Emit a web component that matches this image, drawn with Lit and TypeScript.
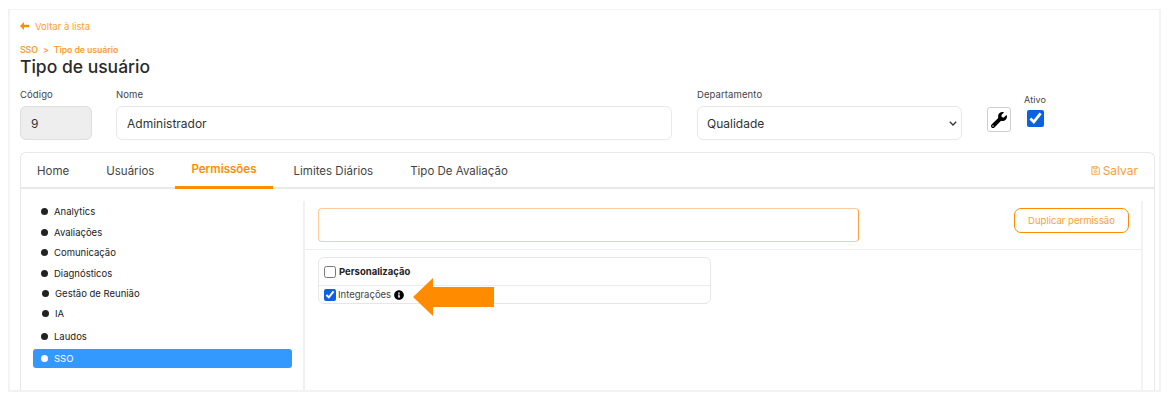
import { LitElement, html, css, svg } from "lit";
import { customElement } from "lit/decorators.js";

const WRENCH = svg`<path d="M507.73 109.1c-2.24-9.03-13.54-12.09-20.12-5.51l-74.36 74.36-67.88-11.31-11.31-67.88 74.36-74.36c6.62-6.62 3.43-17.9-5.66-20.16-47.38-11.74-99.55.91-136.58 37.93-39.64 39.64-50.55 97.1-34.05 147.2L18.74 402.76c-24.99 24.99-24.99 65.51 0 90.5 24.99 24.99 65.51 24.99 90.5 0l213.21-213.21c50.12 16.71 107.47 5.68 147.37-34.22 37.07-37.07 49.7-89.32 37.91-136.73zM64 472c-13.25 0-24-10.75-24-24 0-13.26 10.75-24 24-24s24 10.74 24 24c0 13.25-10.75 24-24 24z"/>`;
const INFO = svg`<path d="M256 8C119 8 8 119 8 256s111 248 248 248 248-111 248-248S393 8 256 8zm0 110c23.2 0 42 18.8 42 42s-18.8 42-42 42-42-18.8-42-42 18.8-42 42-42zm56 254c0 6.6-5.4 12-12 12h-88c-6.6 0-12-5.4-12-12v-24c0-6.6 5.4-12 12-12h12v-64h-12c-6.6 0-12-5.4-12-12v-24c0-6.6 5.4-12 12-12h64c6.6 0 12 5.4 12 12v100h12c6.6 0 12 5.4 12 12v24z"/>`;

const ITEMS = [
  { label: "Analytics", h: 20, x: 8 },
  { label: "Avaliações", h: 23, x: 8 },
  { label: "Comunicação", h: 16, x: 8 },
  { label: "Diagnósticos", h: 26, x: 8 },
  { label: "Gestão de Reunião", h: 14, x: 9 },
  { label: "IA", h: 26, x: 9 },
  { label: "Laudos", h: 20, x: 8 },
];

@customElement("app-root")
export class AppRoot extends LitElement {
  static styles = css`
    :host { display: block; height: 406px; background: #fff; font-family: Inter, "Noto Sans", sans-serif; color: #333; overflow: hidden; }
    .page { margin: 9px 11px 0 8px; height: 383px; box-sizing: border-box; border: 2px solid #f3f3f3; border-top-width: 1px; padding: 9px 4px 0 10px; display: flex; flex-direction: column; position: relative; }
    .back { height: 14px; display: flex; align-items: center; gap: 6px; font-size: 9.5px; color: #ff9d33; }
    .back svg { width: 9px; height: 8px; fill: #ff8c00; }
    .crumb { margin-top: 10px; height: 12px; display: flex; align-items: center; gap: 5px; font-size: 8.8px; font-weight: 600; color: #ff9d33; letter-spacing: -0.1px; }
    h1 { margin: 1px 0 0; height: 22px; line-height: 22px; font-size: 17.5px; font-weight: 500; color: #2b2b2b; }
    .fields { margin-top: 11px; display: flex; align-items: flex-start; }
    .field { display: flex; flex-direction: column; gap: 5px; }
    label, .lbl { height: 12px; line-height: 12px; font-size: 9.5px; color: #444; letter-spacing: 0.1px; }
    .code { width: 72px; margin-right: 24px; }
    .name { width: 556px; margin-right: 25px; }
    .dept { width: 265px; margin-right: 25px; }
    .input { height: 34px; box-sizing: border-box; border: 1px solid #e8e8e8; border-radius: 6px; padding: 0 10px; font: 400 12px Inter, sans-serif; color: #333; background: #fff; outline: none; width: 100%; }
    .input.off { background: #eeeeee; border-color: #dedede; }
    select.input {
      appearance: none;
      padding-left: 9px;
      background-image: url("data:image/svg+xml,%3Csvg xmlns='http://www.w3.org/2000/svg' width='8' height='5' viewBox='0 0 8 5'%3E%3Cpath d='M.8.8 4 4 7.2.8' fill='none' stroke='%23333' stroke-width='1.3'/%3E%3C/svg%3E");
      background-repeat: no-repeat;
      background-position: right 4px center;
    }
    .tool { margin-top: 18px; width: 24px; height: 25px; box-sizing: border-box; border: 1px solid #cfcfcf; border-radius: 3px; background: #fff; display: flex; align-items: center; justify-content: center; padding: 0; margin-right: 13px; }
    .tool svg { width: 16px; height: 16px; fill: #000; }
    .ativo { margin-top: 5px; display: flex; flex-direction: column; gap: 4px; }
    .ativo .lbl { font-size: 9px; }
    .ativo input { width: 17px; height: 17px; margin: 0 0 0 3px; accent-color: #0b62e0; }

    .tabs { margin-top: 12px; flex: 1; border: 1px solid #e8e8e8; border-bottom: 0; border-radius: 6px 6px 0 0; display: flex; flex-direction: column; min-height: 0; }
    .bar { height: 36px; box-sizing: border-box; border-bottom: 2px solid #e9e9e9; display: flex; align-items: stretch; gap: 5px; padding-right: 16px; flex: none; }
    .tab { padding: 0 16px; display: flex; align-items: center; font-size: 11.5px; color: #444; height: 36px; box-sizing: border-box; }
    .tab.active { color: #ff8c00; font-weight: 600; border-bottom: 3px solid #ff8c00; padding-bottom: 1px; margin-bottom: -2px; letter-spacing: 0.02px; }
    .save { margin-left: auto; display: flex; align-items: center; gap: 3px; font-size: 12px; color: #ff9d33; }
    .save svg { width: 9px; height: 9px; }

    .body { flex: 1; display: flex; padding-top: 12px; padding-right: 11px; min-height: 0; }
    .side { width: 284px; flex: none; border-right: 2px solid #f1f1f1; padding-left: 12px; padding-right: 11px; box-sizing: border-box; }
    .item { display: flex; align-items: center; font-size: 9.5px; color: #222; }
    .dot { width: 7px; height: 7px; border-radius: 50%; background: #222; flex: none; margin-right: 6px; }
    .item.sel { margin-top: 3px; height: 19px; border-radius: 3px; background: #3399ff; color: #fff; padding-left: 8px; }
    .item.sel .dot { background: #fff; }
    .main { flex: 1; border-right: 2px solid #f3f3f3; display: flex; flex-direction: column; min-width: 0; }
    .top { height: 49px; box-sizing: border-box; border-bottom: 1px solid #eeeeee; padding: 7px 12px 0 13px; display: flex; align-items: flex-start; justify-content: space-between; }
    .search { width: 541px; height: 34px; box-sizing: border-box; border: 1px solid #ffcb99; border-right-color: #ff9f40; border-radius: 4px; outline: none; background: #fff; }
    .dup { width: 115px; height: 25px; box-sizing: border-box; border: 1.5px solid #ff8c00; border-radius: 7px; background: #fff; color: #ff9d33; font: 400 9.5px Inter, sans-serif; padding: 0; }
    .perm { margin: 7px 0 0 13px; width: 393px; height: 47px; box-sizing: border-box; border: 1px solid #e6e6e6; border-radius: 6px; }
    .row { display: flex; align-items: center; box-sizing: border-box; padding-left: 5px; }
    .row.a { height: 28px; border-bottom: 1px solid #ececec; gap: 3px; }
    .row.b { height: 17px; gap: 3px; font-size: 9.5px; color: #444; }
    .row.b input { margin-right: -1px; }
    .row input { margin: 0; width: 12px; height: 12px; accent-color: #0b62e0; }
    .row b { font-size: 9.5px; font-weight: 700; color: #222; }
    .row svg { width: 10px; height: 10px; fill: #000; flex: none; }
    .arrow { position: absolute; left: 403px; top: 268px; width: 81px; height: 38px; fill: #ff8c00; }
  `;

  render() {
    return html`<div class="page">
      <div class="back">
        <svg viewBox="0 0 9 8"><path d="M4 0 0 4l4 4V5.2h5V2.8H4z"/></svg>
        <span>Voltar à lista</span>
      </div>
      <div class="crumb"><span>SSO</span><span>&gt;</span><span>Tipo de usuário</span></div>
      <h1>Tipo de usuário</h1>
      <div class="fields">
        <div class="field code"><label>Código</label><input class="input off" value="9" readonly /></div>
        <div class="field name"><label>Nome</label><input class="input" value="Administrador" /></div>
        <div class="field dept"><label>Departamento</label>
          <select class="input"><option>Qualidade</option></select></div>
        <button class="tool"><svg viewBox="0 0 512 512">${WRENCH}</svg></button>
        <div class="ativo"><span class="lbl">Ativo</span><input type="checkbox" checked /></div>
      </div>
      <div class="tabs">
        <div class="bar">
          <div class="tab">Home</div>
          <div class="tab">Usuários</div>
          <div class="tab active">Permissões</div>
          <div class="tab">Limites Diários</div>
          <div class="tab">Tipo De Avaliação</div>
          <div class="save">
            <svg viewBox="0 0 10 10" fill="none" stroke="#ff9d33" stroke-width="1"><path d="M1 .8h6.2L9.2 2.8v6.4H1z"/><path d="M3 .8v2.4h3.4V.8"/><circle cx="5" cy="6.2" r="1.2"/></svg>
            <span>Salvar</span>
          </div>
        </div>
        <div class="body">
          <div class="side">
            ${ITEMS.map(
              (i) => html`<div class="item" style="height:${i.h}px;padding-left:${i.x}px"><span class="dot"></span>${i.label}</div>`
            )}
            <div class="item sel"><span class="dot"></span>SSO</div>
          </div>
          <div class="main">
            <div class="top">
              <input class="search" />
              <button class="dup">Duplicar permissão</button>
            </div>
            <div class="perm">
              <div class="row a"><input type="checkbox" /><b>Personalização</b></div>
              <div class="row b"><input type="checkbox" checked /><span>Integrações</span><svg viewBox="0 0 512 512">${INFO}</svg></div>
            </div>
          </div>
        </div>
      </div>
      <svg class="arrow" viewBox="0 0 81 38"><path d="M0 19 20 0v9h61v20H20v9z"/></svg>
    </div>`;
  }
}
